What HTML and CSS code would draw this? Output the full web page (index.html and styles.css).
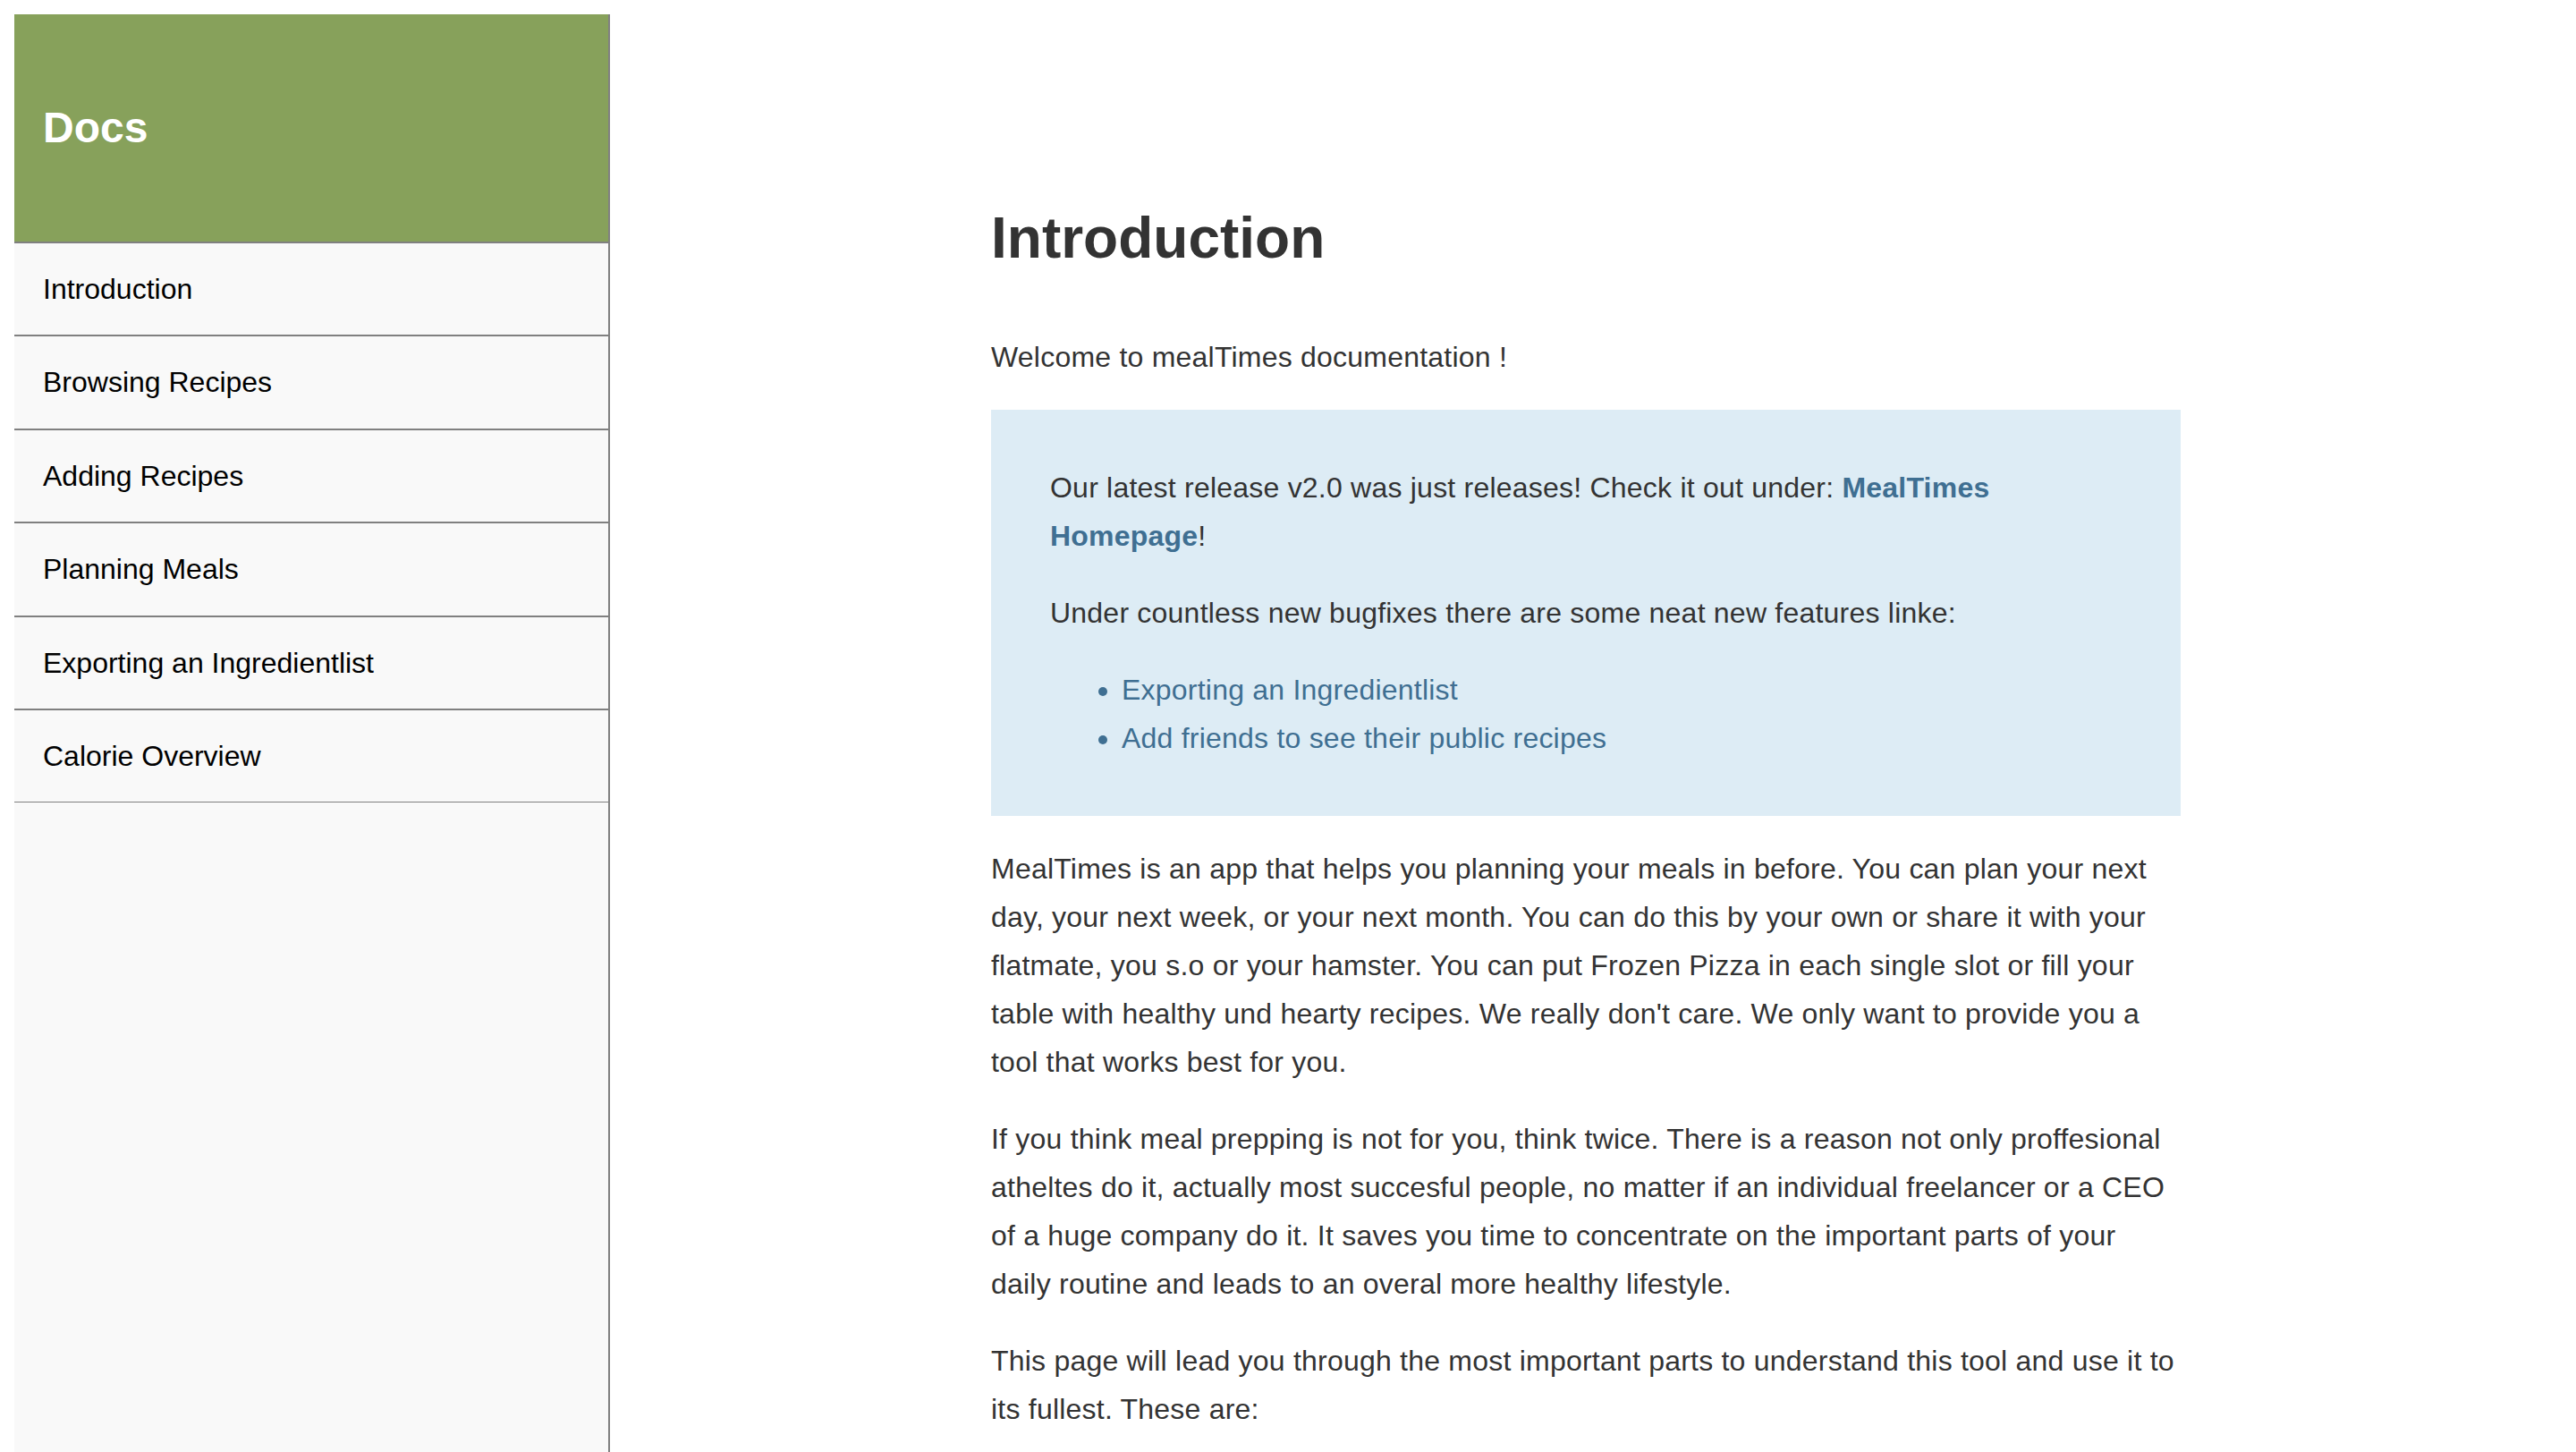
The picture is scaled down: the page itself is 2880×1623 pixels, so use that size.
FILE: index.html
```html
<!DOCTYPE html>
<html lang="en">
<head>
<meta charset="utf-8">
<title>mealTimes Docs</title>
<link rel="stylesheet" href="styles.css">
</head>
<body>
<div class="layout">
  <nav class="sidebar">
    <header class="sidebar-header">Docs</header>
    <ul class="nav-list">
      <li class="nav-item"><a class="nav-link" href="#introduction">Introduction</a></li>
      <li class="nav-item"><a class="nav-link" href="#browsing">Browsing Recipes</a></li>
      <li class="nav-item"><a class="nav-link" href="#adding">Adding Recipes</a></li>
      <li class="nav-item"><a class="nav-link" href="#planning">Planning Meals</a></li>
      <li class="nav-item"><a class="nav-link" href="#exporting">Exporting an Ingredientlist</a></li>
      <li class="nav-item nav-item-last"><a class="nav-link" href="#calories">Calorie Overview</a></li>
    </ul>
  </nav>
  <main class="main">
    <section class="article" id="introduction">
      <h1 class="title">Introduction</h1>
      <p class="text">Welcome to mealTimes documentation !</p>
      <div class="callout">
        <p class="text">Our latest release v2.0 was just releases! Check it out under: <a class="strong-link" href="#">MealTimes Homepage</a>!</p>
        <p class="text">Under countless new bugfixes there are some neat new features linke:</p>
        <ul class="feature-list">
          <li class="feature"><a class="feature-link" href="#exporting">Exporting an Ingredientlist</a></li>
          <li class="feature"><a class="feature-link" href="#">Add friends to see their public recipes</a></li>
        </ul>
      </div>
      <p class="text">MealTimes is an app that helps you planning your meals in before. You can plan your next day, your next week, or your next month. You can do this by your own or share it with your flatmate, you s.o or your hamster. You can put Frozen Pizza in each single slot or fill your table with healthy und hearty recipes. We really don't care. We only want to provide you a tool that works best for you.</p>
      <p class="text">If you think meal prepping is not for you, think twice. There is a reason not only proffesional atheltes do it, actually most succesful people, no matter if an individual freelancer or a CEO of a huge company do it. It saves you time to concentrate on the important parts of your daily routine and leads to an overal more healthy lifestyle.</p>
      <p class="text">This page will lead you through the most important parts to understand this tool and use it to its fullest. These are:</p>
      <ul class="topic-list">
        <li>Browsing Recipes</li>
        <li>Adding Recipes</li>
        <li>Planning Meals</li>
        <li>Exporting an Ingredientlist</li>
        <li>Calorie Overview</li>
      </ul>
    </section>
  </main>
</div>
</body>
</html>
```

FILE: styles.css
```css
html, body {
  margin: 0;
  padding: 0;
}

body {
  margin: 16px 16px 0 16px;
  font-family: "Liberation Sans", Arial, Helvetica, sans-serif;
  background: #ffffff;
  color: #333333;
}

.layout {
  display: flex;
  align-items: stretch;
  min-height: calc(100vh - 16px);
}

.sidebar {
  flex: 0 0 666px;
  width: 666px;
  box-sizing: border-box;
  background: #f9f9f9;
  border-right: 2px solid #808080;
}

.sidebar-header {
  height: 256px;
  box-sizing: border-box;
  display: flex;
  align-items: center;
  padding: 0 32px 2px 32px;
  background: #87a15b;
  color: #ffffff;
  font-size: 48px;
  font-weight: bold;
  border-bottom: 2px solid #808080;
}

.nav-list {
  list-style: none;
  margin: 0;
  padding: 0;
}

.nav-item {
  border-top: 2px solid #808080;
}

.nav-item:first-child {
  border-top: none;
}

.nav-item-last {
  border-bottom: 1px solid #808080;
}

.nav-link {
  display: block;
  padding: 33px 32px;
  line-height: 36.4px;
  font-size: 32px;
  color: #000000;
  text-decoration: none;
}

.main {
  flex: 1 1 auto;
  padding: 196px 0 0 426px;
}

.article {
  width: 1330px;
}

.title {
  margin: 0 0 51px 0;
  font-size: 64px;
  line-height: 108.8px;
  font-weight: bold;
  color: #333333;
}

.text {
  margin: 32px 0;
  font-size: 32px;
  line-height: 54px;
  letter-spacing: 0.22px;
  color: #333333;
}

.title + .text {
  margin-top: 0;
}

.callout {
  margin: 32px 0;
  padding: 28px 64px 28px 66px;
  background: #ddecf5;
}

.callout .text:first-child {
  margin-top: 32px;
}

.strong-link {
  color: #3f6f92;
  font-weight: bold;
  text-decoration: none;
}

.feature-list {
  margin: 32px 0;
  padding-left: 80px;
  font-size: 32px;
  line-height: 54px;
  letter-spacing: 0.22px;
  color: #3f6f92;
}

.feature-link {
  color: #3f6f92;
  text-decoration: none;
}

.topic-list {
  margin: 32px 0;
  padding-left: 80px;
  font-size: 32px;
  line-height: 54px;
}
```
